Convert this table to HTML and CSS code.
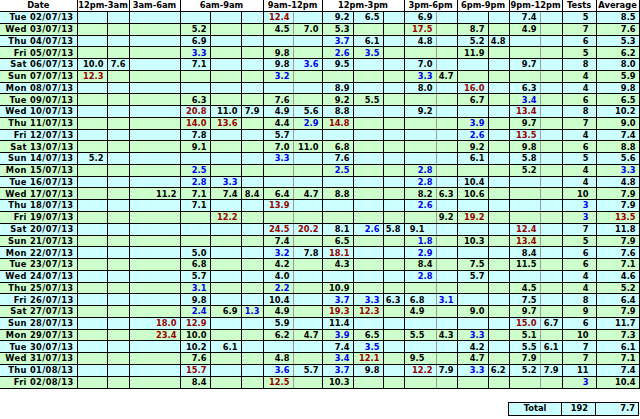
FILE: index.html
```html
<!DOCTYPE html>
<html>
<head>
<meta charset="utf-8">
<link rel="stylesheet" href="styles.css">
</head>
<body>
<div class="sheet">
<table class="grid">
<colgroup>
<col class="w77"><col class="w30"><col class="w22"><col class="w51"><col class="w30"><col class="w31"><col class="w22"><col class="w30"><col class="w29"><col class="w31"><col class="w30"><col class="w21"><col class="w32"><col class="w21"><col class="w31"><col class="w21"><col class="w31"><col class="w22"><col class="w34"><col class="w43">
</colgroup>
<thead>
<tr><th>Date</th><th colspan="2">12pm-3am</th><th>3am-6am</th><th colspan="3">6am-9am</th><th colspan="2">9am-12pm</th><th colspan="3">12pm-3pm</th><th colspan="2">3pm-6pm</th><th colspan="2">6pm-9pm</th><th colspan="2">9pm-12pm</th><th>Tests</th><th>Average</th></tr>
</thead>
<tbody>
<tr><td>Tue 02/07/13</td><td></td><td></td><td></td><td></td><td></td><td></td><td class="r">12.4</td><td></td><td>9.2</td><td>6.5</td><td></td><td>6.9</td><td></td><td></td><td></td><td>7.4</td><td></td><td>5</td><td>8.5</td></tr>
<tr><td>Wed 03/07/13</td><td></td><td></td><td></td><td>5.2</td><td></td><td></td><td>4.5</td><td>7.0</td><td>5.3</td><td></td><td></td><td class="r">17.5</td><td></td><td>8.7</td><td></td><td>4.9</td><td></td><td>7</td><td>7.6</td></tr>
<tr><td>Thu 04/07/13</td><td></td><td></td><td></td><td>6.9</td><td></td><td></td><td></td><td></td><td class="b">3.7</td><td>6.1</td><td></td><td>4.8</td><td></td><td>5.2</td><td>4.8</td><td></td><td></td><td>6</td><td>5.3</td></tr>
<tr><td>Fri 05/07/13</td><td></td><td></td><td></td><td class="b">3.3</td><td></td><td></td><td>9.8</td><td></td><td class="b">2.6</td><td class="b">3.5</td><td></td><td></td><td></td><td>11.9</td><td></td><td></td><td></td><td>5</td><td>6.2</td></tr>
<tr><td>Sat 06/07/13</td><td>10.0</td><td>7.6</td><td></td><td>7.1</td><td></td><td></td><td>9.8</td><td class="b">3.6</td><td>9.5</td><td></td><td></td><td>7.0</td><td></td><td></td><td></td><td>9.7</td><td></td><td>8</td><td>8.0</td></tr>
<tr><td>Sun 07/07/13</td><td class="r">12.3</td><td></td><td></td><td></td><td></td><td></td><td class="b">3.2</td><td></td><td></td><td></td><td></td><td class="b">3.3</td><td>4.7</td><td></td><td></td><td></td><td></td><td>4</td><td>5.9</td></tr>
<tr><td>Mon 08/07/13</td><td></td><td></td><td></td><td></td><td></td><td></td><td></td><td></td><td>8.9</td><td></td><td></td><td>8.0</td><td></td><td class="r">16.0</td><td></td><td>6.3</td><td></td><td>4</td><td>9.8</td></tr>
<tr><td>Tue 09/07/13</td><td></td><td></td><td></td><td>6.3</td><td></td><td></td><td>7.6</td><td></td><td>9.2</td><td>5.5</td><td></td><td></td><td></td><td>6.7</td><td></td><td class="b">3.4</td><td></td><td>6</td><td>6.5</td></tr>
<tr><td>Wed 10/07/13</td><td></td><td></td><td></td><td class="r">20.8</td><td>11.0</td><td>7.9</td><td>4.9</td><td>5.6</td><td>8.8</td><td></td><td></td><td>9.2</td><td></td><td></td><td></td><td class="r">13.4</td><td></td><td>8</td><td>10.2</td></tr>
<tr><td>Thu 11/07/13</td><td></td><td></td><td></td><td class="r">14.0</td><td class="r">13.6</td><td></td><td>4.4</td><td class="b">2.9</td><td class="r">14.8</td><td></td><td></td><td></td><td></td><td class="b">3.9</td><td></td><td>9.7</td><td></td><td>7</td><td>9.0</td></tr>
<tr><td>Fri 12/07/13</td><td></td><td></td><td></td><td>7.8</td><td></td><td></td><td>5.7</td><td></td><td></td><td></td><td></td><td></td><td></td><td class="b">2.6</td><td></td><td class="r">13.5</td><td></td><td>4</td><td>7.4</td></tr>
<tr><td>Sat 13/07/13</td><td></td><td></td><td></td><td>9.1</td><td></td><td></td><td>7.0</td><td>11.0</td><td>6.8</td><td></td><td></td><td></td><td></td><td>9.2</td><td></td><td>9.8</td><td></td><td>6</td><td>8.8</td></tr>
<tr><td>Sun 14/07/13</td><td>5.2</td><td></td><td></td><td></td><td></td><td></td><td class="b">3.3</td><td></td><td>7.6</td><td></td><td></td><td></td><td></td><td>6.1</td><td></td><td>5.8</td><td></td><td>5</td><td>5.6</td></tr>
<tr><td>Mon 15/07/13</td><td></td><td></td><td></td><td class="b">2.5</td><td></td><td></td><td></td><td></td><td class="b">2.5</td><td></td><td></td><td class="b">2.8</td><td></td><td></td><td></td><td>5.2</td><td></td><td>4</td><td class="b">3.3</td></tr>
<tr><td>Tue 16/07/13</td><td></td><td></td><td></td><td class="b">2.8</td><td class="b">3.3</td><td></td><td></td><td></td><td></td><td></td><td></td><td class="b">2.8</td><td></td><td>10.4</td><td></td><td></td><td></td><td>4</td><td>4.8</td></tr>
<tr><td>Wed 17/07/13</td><td></td><td></td><td>11.2</td><td>7.1</td><td>7.4</td><td>8.4</td><td>6.4</td><td>4.7</td><td>8.8</td><td></td><td></td><td>8.2</td><td>6.3</td><td>10.6</td><td></td><td></td><td></td><td>10</td><td>7.9</td></tr>
<tr><td>Thu 18/07/13</td><td></td><td></td><td></td><td>7.1</td><td></td><td></td><td class="r">13.9</td><td></td><td></td><td></td><td></td><td class="b">2.6</td><td></td><td></td><td></td><td></td><td></td><td class="b">3</td><td>7.9</td></tr>
<tr><td>Fri 19/07/13</td><td></td><td></td><td></td><td></td><td class="r">12.2</td><td></td><td></td><td></td><td></td><td></td><td></td><td></td><td>9.2</td><td class="r">19.2</td><td></td><td></td><td></td><td class="b">3</td><td class="r">13.5</td></tr>
<tr><td>Sat 20/07/13</td><td></td><td></td><td></td><td></td><td></td><td></td><td class="r">24.5</td><td class="r">20.2</td><td>8.1</td><td class="b">2.6</td><td>5.8</td><td class="sh">9.1</td><td></td><td></td><td></td><td class="r">12.4</td><td></td><td>7</td><td>11.8</td></tr>
<tr><td>Sun 21/07/13</td><td></td><td></td><td></td><td></td><td></td><td></td><td>7.4</td><td></td><td>6.5</td><td></td><td></td><td class="b">1.8</td><td></td><td>10.3</td><td></td><td class="r">13.4</td><td></td><td>5</td><td>7.9</td></tr>
<tr><td>Mon 22/07/13</td><td></td><td></td><td></td><td>5.0</td><td></td><td></td><td class="b">3.2</td><td>7.8</td><td class="r">18.1</td><td></td><td></td><td class="b">2.9</td><td></td><td></td><td></td><td>8.4</td><td></td><td>6</td><td>7.6</td></tr>
<tr><td>Tue 23/07/13</td><td></td><td></td><td></td><td>6.8</td><td></td><td></td><td>4.2</td><td></td><td>4.3</td><td></td><td></td><td>8.4</td><td></td><td>7.5</td><td></td><td>11.5</td><td></td><td>6</td><td>7.1</td></tr>
<tr><td>Wed 24/07/13</td><td></td><td></td><td></td><td>5.7</td><td></td><td></td><td>4.0</td><td></td><td></td><td></td><td></td><td class="b">2.8</td><td></td><td>5.7</td><td></td><td></td><td></td><td>4</td><td>4.6</td></tr>
<tr><td>Thu 25/07/13</td><td></td><td></td><td></td><td class="b">3.1</td><td></td><td></td><td class="b">2.2</td><td></td><td>10.9</td><td></td><td></td><td></td><td></td><td></td><td></td><td>4.5</td><td></td><td>4</td><td>5.2</td></tr>
<tr><td>Fri 26/07/13</td><td></td><td></td><td></td><td>9.8</td><td></td><td></td><td>10.4</td><td></td><td class="b">3.7</td><td class="b">3.3</td><td>6.3</td><td class="sh">6.8</td><td class="b">3.1</td><td></td><td></td><td>7.5</td><td></td><td>8</td><td>6.4</td></tr>
<tr><td>Sat 27/07/13</td><td></td><td></td><td></td><td class="b">2.4</td><td>6.9</td><td class="b">1.3</td><td>4.9</td><td></td><td class="r">19.3</td><td class="r">12.3</td><td></td><td class="sh">4.9</td><td></td><td>9.0</td><td></td><td>9.7</td><td></td><td>9</td><td>7.9</td></tr>
<tr><td>Sun 28/07/13</td><td></td><td></td><td class="r">18.0</td><td class="r">12.9</td><td></td><td></td><td>5.9</td><td></td><td>11.4</td><td></td><td></td><td></td><td></td><td></td><td></td><td class="r">15.0</td><td>6.7</td><td>6</td><td>11.7</td></tr>
<tr><td>Mon 29/07/13</td><td></td><td></td><td class="r">23.4</td><td>10.0</td><td></td><td></td><td>6.2</td><td>4.7</td><td class="b">3.9</td><td>6.5</td><td></td><td class="sh">5.5</td><td>4.3</td><td class="b">3.3</td><td></td><td>5.1</td><td></td><td>10</td><td>7.3</td></tr>
<tr><td>Tue 30/07/13</td><td></td><td></td><td></td><td>10.2</td><td>6.1</td><td></td><td></td><td></td><td>7.4</td><td class="b">3.5</td><td></td><td></td><td></td><td>4.2</td><td></td><td>5.5</td><td>6.1</td><td>7</td><td>6.1</td></tr>
<tr><td>Wed 31/07/13</td><td></td><td></td><td></td><td>7.6</td><td></td><td></td><td>4.8</td><td></td><td class="b">3.4</td><td class="r">12.1</td><td></td><td class="sh">9.5</td><td></td><td>4.7</td><td></td><td>7.9</td><td></td><td>7</td><td>7.1</td></tr>
<tr><td>Thu 01/08/13</td><td></td><td></td><td></td><td class="r">15.7</td><td></td><td></td><td class="b">3.6</td><td>5.7</td><td class="b">3.7</td><td>9.8</td><td></td><td class="r">12.2</td><td>7.9</td><td class="b">3.3</td><td>6.2</td><td>5.2</td><td>7.9</td><td>11</td><td>7.4</td></tr>
<tr><td>Fri 02/08/13</td><td></td><td></td><td></td><td>8.4</td><td></td><td></td><td class="r">12.5</td><td></td><td>10.3</td><td></td><td></td><td></td><td></td><td></td><td></td><td></td><td></td><td class="b">3</td><td>10.4</td></tr>
</tbody>
</table>
<table class="total">
<colgroup><col class="w53"><col class="w34"><col class="w43"></colgroup>
<tbody>
<tr><td class="label">Total</td><td>192</td><td>7.7</td></tr>
</tbody>
</table>
</div>
</body>
</html>
```
FILE: styles.css
```css
html, body {
  margin: 0;
  padding: 0;
  background: #ffffff;
}

body {
  font-family: "DejaVu Sans", Verdana, sans-serif;
  font-weight: bold;
  font-size: 8.3px;
  color: #000000;
}

.sheet {
  width: 640px;
  display: flex;
  flex-direction: column;
}

table {
  border-collapse: collapse;
  table-layout: fixed;
}

.grid {
  width: 639px;
}

.w77 { width: 77px; }
.w53 { width: 53px; }
.w51 { width: 51px; }
.w43 { width: 43px; }
.w34 { width: 34px; }
.w32 { width: 32px; }
.w31 { width: 31px; }
.w30 { width: 30px; }
.w29 { width: 29px; }
.w22 { width: 22px; }
.w21 { width: 21px; }

th, td {
  border: 1px solid #000000;
  padding: 0 3px 0 0;
  white-space: nowrap;
  overflow: hidden;
  line-height: 1;
  vertical-align: middle;
}

td {
  text-align: right;
}

.grid thead th {
  height: 11px;
  padding: 0;
  text-align: center;
  font-weight: bold;
  background: #ffffff;
  border-top: none;
}

.grid th:first-child,
.grid td:first-child {
  border-left: none;
}

.grid td:first-child {
  letter-spacing: 0.35px;
}

.grid tbody tr {
  height: 11.78px;
}

.grid tbody tr:nth-child(odd) {
  background: #ccffff;
}

.grid tbody tr:nth-child(even) {
  background: #ccffcc;
}

.grid tbody td:nth-child(8),
.grid tbody td:nth-child(13),
.grid tbody td:nth-child(17) {
  border-right-color: #9a9a9a;
}

.grid tbody td:nth-child(19) {
  padding-right: 7px;
}

.grid td.sh {
  padding-right: 11px;
}

.r {
  color: #990000;
}

.b {
  color: #0000ee;
}

.total {
  width: 131px;
  margin: 13px 0 0 508px;
  background: #ccffff;
}

.total tr {
  height: 13px;
}

.total td.label {
  text-align: center;
  padding: 0;
}

.total td:nth-child(2) {
  padding-right: 7px;
}
```
